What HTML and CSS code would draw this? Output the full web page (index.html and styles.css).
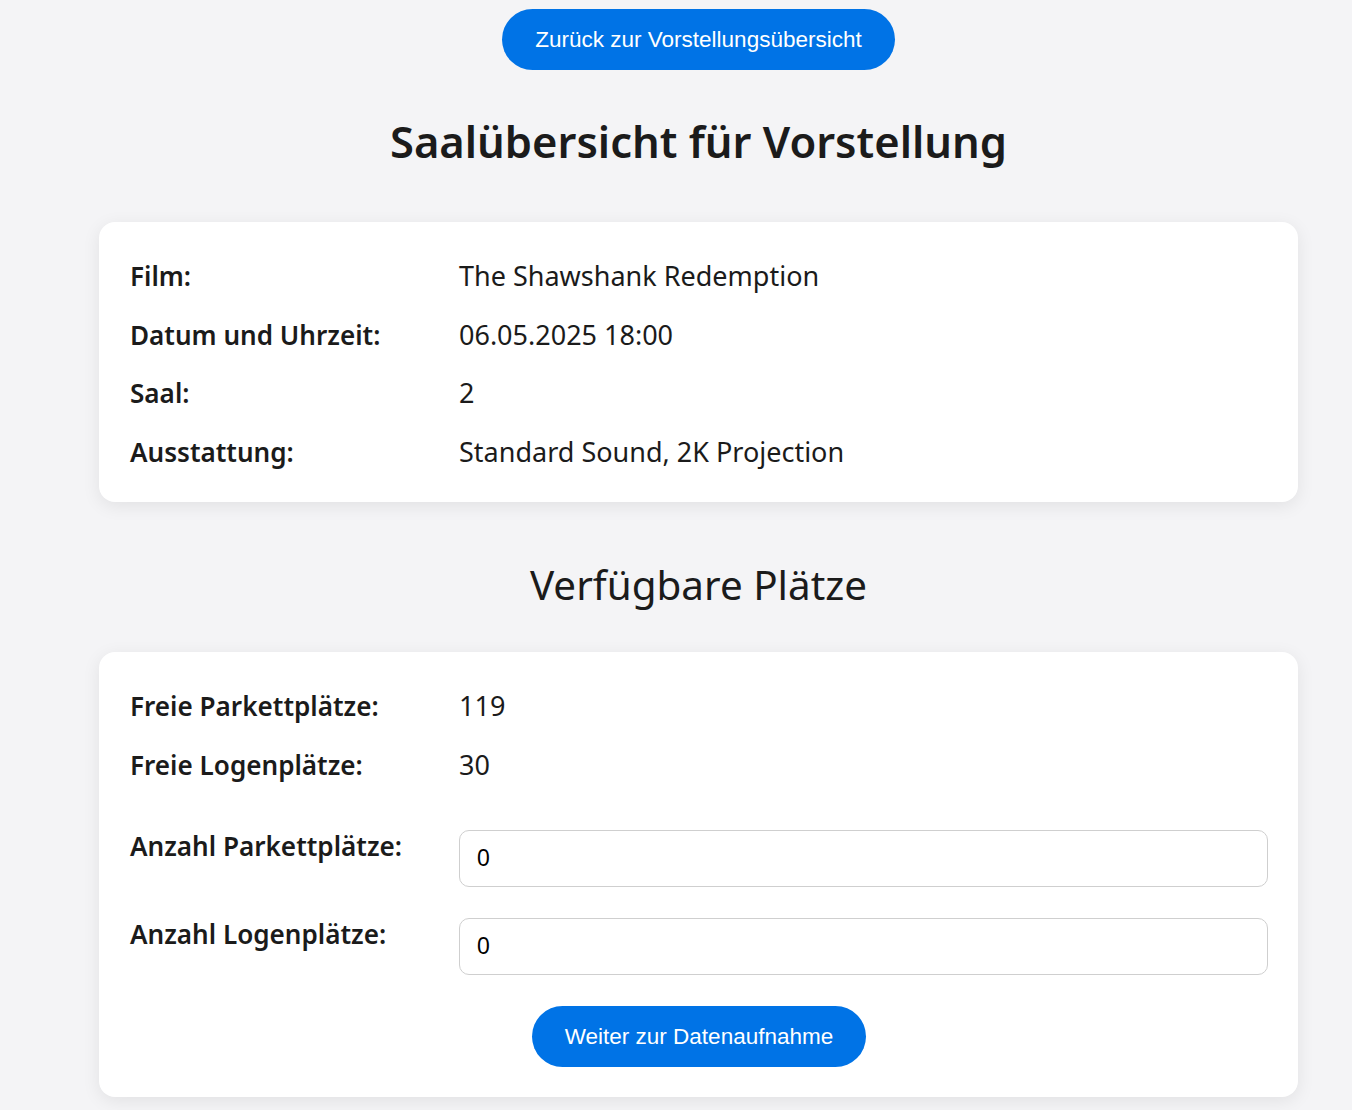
FILE: index.html
```html
<!DOCTYPE html>
<html lang="de">
<head>
<meta charset="utf-8">
<title>Saalübersicht</title>
<link rel="stylesheet" href="styles.css">
</head>
<body>
<div class="page">
  <div class="top">
    <a class="btn" href="#">Zurück zur Vorstellungsübersicht</a>
  </div>
  <h1 class="title">Saalübersicht für Vorstellung</h1>
  <section class="card">
    <div class="info">
      <div class="label">Film:</div><div class="value">The Shawshank Redemption</div>
      <div class="label">Datum und Uhrzeit:</div><div class="value">06.05.2025 18:00</div>
      <div class="label">Saal:</div><div class="value">2</div>
      <div class="label">Ausstattung:</div><div class="value">Standard Sound, 2K Projection</div>
    </div>
  </section>
  <h2 class="subtitle">Verfügbare Plätze</h2>
  <section class="card">
    <div class="info">
      <div class="label">Freie Parkettplätze:</div><div class="value">119</div>
      <div class="label">Freie Logenplätze:</div><div class="value">30</div>
    </div>
    <form class="form">
      <div class="form-row">
        <label class="label" for="parkett">Anzahl Parkettplätze:</label>
        <input class="input" id="parkett" type="number" value="0">
      </div>
      <div class="form-row">
        <label class="label" for="loge">Anzahl Logenplätze:</label>
        <input class="input" id="loge" type="number" value="0">
      </div>
      <div class="actions">
        <button class="btn" type="button">Weiter zur Datenaufnahme</button>
      </div>
    </form>
  </section>
</div>
</body>
</html>
```
FILE: styles.css
```css
html, body {
  margin: 0;
  padding: 0;
  background: #f4f4f6;
}
body {
  font-family: "Noto Sans", "Open Sans", sans-serif;
  color: #1b1b1b;
  font-size: 27px;
  line-height: 38.7px;
}
.page {
  width: 1199px;
  margin-left: 99px;
  padding-top: 9px;
  padding-bottom: 13px;
}
.top {
  display: flex;
  justify-content: center;
}
.btn {
  display: inline-block;
  font-family: "Liberation Sans", Arial, sans-serif;
  font-size: 22.5px;
  line-height: 26px;
  padding: 17.5px 33px;
  color: #ffffff;
  background: #0073e6;
  border: none;
  border-radius: 31px;
  text-decoration: none;
  cursor: pointer;
}
.title {
  margin: 0;
  padding-top: 43px;
  height: 152px;
  box-sizing: border-box;
  text-align: center;
  font-size: 43.5px;
  line-height: 56px;
  font-weight: 600;
}
.card {
  background: #ffffff;
  border-radius: 16px;
  box-shadow: 0 4px 18px rgba(0, 0, 0, 0.08);
  padding: 35px 30px 30px 31px;
}
.info {
  display: grid;
  grid-template-columns: 329px 1fr;
  row-gap: 20px;
}
.label {
  font-weight: 600;
  font-size: 26.1px;
}
.subtitle {
  margin: 0;
  height: 150px;
  box-sizing: border-box;
  padding-top: 58px;
  text-align: center;
  font-size: 40.4px;
  line-height: 50px;
  font-weight: 400;
}
.form {
  margin: 0;
  padding-top: 46px;
  display: flex;
  flex-direction: column;
  gap: 31px;
}
.form-row {
  display: grid;
  grid-template-columns: 329px 1fr;
  align-items: start;
}
.form-row .label {
  margin-top: -3px;
}
.input {
  box-sizing: border-box;
  height: 57px;
  width: 100%;
  border: 1px solid #cfcfcf;
  border-radius: 10px;
  padding: 0 17px;
  font-family: "Liberation Sans", Arial, sans-serif;
  font-size: 23px;
  color: #000;
  background: #fff;
  -moz-appearance: textfield;
}
.input::-webkit-outer-spin-button,
.input::-webkit-inner-spin-button {
  -webkit-appearance: none;
  margin: 0;
}
.actions {
  display: flex;
  justify-content: center;
}
```
